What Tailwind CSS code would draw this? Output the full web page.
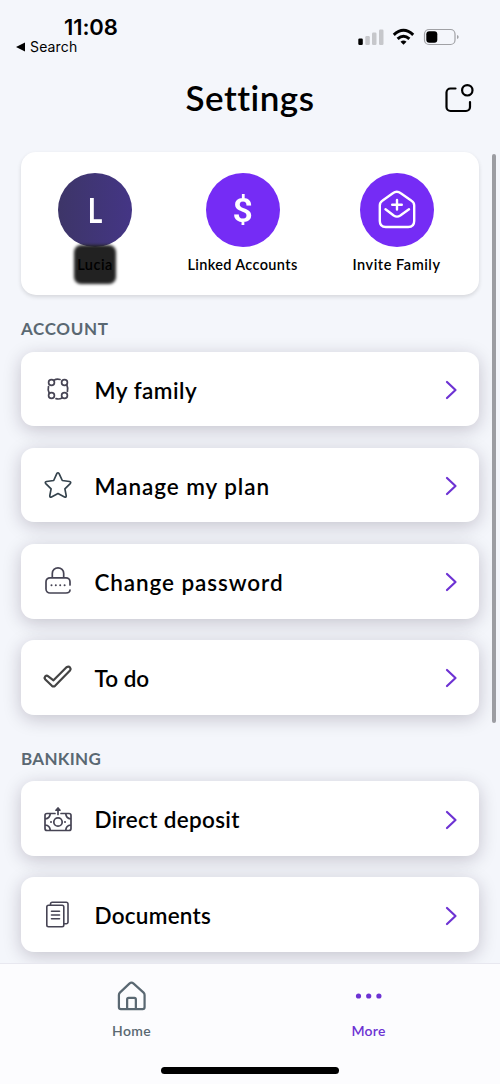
<!DOCTYPE html>
<html lang="en">
<head>
<meta charset="utf-8">
<title>Settings</title>
<script src="https://cdn.jsdelivr.net/npm/@tailwindcss/browser@4"></script>
</head>
<body class="bg-[#f4f6fb]">
<div class="relative flex h-[1084px] w-[500px] flex-col overflow-hidden bg-[#f4f6fb] font-[Lato,sans-serif] text-black">

  <div class="flex h-[60px] shrink-0 justify-between font-[Inter,sans-serif]">
    <div class="pl-4 pt-[15px]">
      <div class="pl-12 text-[22px] leading-[25px] font-semibold tracking-[-0.1px]">11:08</div>
      <div class="flex items-center gap-[5px] text-[14px] leading-[13px] tracking-[0.15px]">
        <svg class="h-[10px] w-[9px]" viewBox="0 0 9 10"><path d="M0 5 9 .5v9z"/></svg>
        <span>Search</span>
      </div>
    </div>
    <svg class="mr-[40px] mt-[26px] h-[22px] w-[103px]" viewBox="357 26 103 22">
      <rect x="358.300" y="38.500" width="4.500" height="6.500" rx="1.200"/>
      <g fill="#c6c7cb"><rect x="365.300" y="36" width="4.500" height="9" rx="1.200"/><rect x="372" y="32.500" width="4.500" height="12.500" rx="1.200"/><rect x="379" y="29.500" width="4.500" height="15.500" rx="1.200"/></g>
      <g fill="none" stroke="#000" stroke-width="3"><path d="M393.800 34.800Q403.500 25.800 413.200 34.800"/><path d="M397.600 38.900Q403.500 33.600 409.400 38.900"/></g>
      <path d="M400.500 41.700q3-2.300 6 0l-3 3.100z"/>
      <rect x="424.500" y="29.500" width="30.500" height="15" rx="4.500" fill="none" stroke="#a0a1a5" stroke-width="1.200"/>
      <rect x="426.300" y="31.300" width="11" height="11.500" rx="3"/>
      <path d="M457 35q1.700.5 1.700 2t-1.700 2z" fill="#a0a1a5"/>
    </svg>
  </div>

  <header class="grid h-[92px] shrink-0 grid-cols-[1fr_auto_1fr] items-start">
    <h1 class="col-start-2 pt-[14px] text-[35px] leading-[46px] font-semibold tracking-[0.5px]">Settings</h1>
    <svg class="mr-[24px] mt-[22px] h-[32px] w-[32px] justify-self-end" viewBox="444.500 82 32 32" fill="none" stroke="#000" stroke-width="2.200" stroke-linecap="round"><path d="M456 88.500h-5a4 4 0 0 0-4 4V107a4 4 0 0 0 4 4h15.500a4 4 0 0 0 4-4v-5"/><circle cx="467.800" cy="90.300" r="5.200"/></svg>
  </header>

  <main class="flex flex-col px-[21px]">
    <section class="flex h-[143px] shrink-0 rounded-[15px] bg-white pt-[21px] text-[14.500px] font-semibold shadow-[0_2px_4px_rgba(0,0,0,0.13)]">
      <div class="flex w-[148px] flex-col items-center">
        <div class="flex size-[74px] items-center justify-center rounded-full bg-linear-to-r from-[#3d3568] to-[#443585] text-[35px] text-white"><span class="-mt-[2px] scale-x-80 leading-none font-bold">L</span></div>
        <div class="relative flex h-[38px] w-[44px] items-center justify-center">
          <div class="absolute inset-x-[1px] -top-[2px] h-[39px] rounded-[7px] bg-[#222] blur-[1.500px]"></div>
          <span class="relative -top-[1px] tracking-[0.5px] text-black">Lucia</span>
        </div>
      </div>
      <div class="flex w-[147px] flex-col items-center">
        <div class="flex size-[74px] items-center justify-center rounded-full bg-[#752cf5] text-[34px] text-white"><span class="scale-x-105 font-[Roboto,sans-serif] leading-none font-semibold">$</span></div>
        <span class="mt-[7px] leading-[22px] tracking-[0.35px] whitespace-nowrap">Linked Accounts</span>
      </div>
      <div class="flex w-[161px] flex-col items-center">
        <div class="size-[74px] rounded-full bg-[#752cf5]">
          <svg class="size-[74px]" viewBox="360 173 74 74" fill="none" stroke="#fff" stroke-width="2.400" stroke-linecap="round" stroke-linejoin="round"><path d="M379.800 205.500q0-3 2.500-4.700l10.500-7.500q4-3 8 0l10.700 7.500q2.700 1.700 2.700 4.700V221q0 6-6 6h-22.400q-6 0-6-6z"/><path d="m385.500 209.300 8.200 6.200q3.300 2.200 6.600 0l8.700-6.200M397 200v9.500M392.200 204.800h9.600"/></svg>
        </div>
        <span class="mt-[7px] leading-[22px] tracking-[0.55px] whitespace-nowrap">Invite Family</span>
      </div>
    </section>

    <h2 class="mt-[23px] h-[33.600px] text-[17px] leading-[21px] font-bold tracking-[0.65px] text-[#5a6872]">ACCOUNT</h2>
    <div class="flex flex-col gap-[21.600px] text-[22.500px] font-semibold">
      <div class="flex h-[74.600px] items-center rounded-[13px] bg-white pr-[21.500px] pl-[21px] shadow-[0_4px_18px_rgba(30,20,45,0.22)]">
        <svg class="size-[32px]" viewBox="0 0 32 32" fill="none" stroke="#464454" stroke-width="1.700" stroke-linecap="round"><circle cx="9.500" cy="9.500" r="2.900"/><circle cx="22.500" cy="9.500" r="2.900"/><circle cx="9.500" cy="22.500" r="2.900"/><circle cx="22.500" cy="22.500" r="2.900"/><path d="M12 7.200q2.500-1.500 6-.7M24.800 12q1.500 3 .6 6.500M20 25q-2.500 1.500-6 .7M7.200 20q-1.600-3-.7-6.500"/></svg>
        <span class="ml-[20.500px] flex-1 pt-[3px] tracking-[0.5px]">My family</span>
        <svg class="mt-[2px] h-[20px] w-[14px]" viewBox="0 0 14 20" fill="none" stroke="#6d32d3" stroke-width="2.200" stroke-linecap="round" stroke-linejoin="round"><path d="m3 2 8.500 8L3 18"/></svg>
      </div>
      <div class="flex h-[74.600px] items-center rounded-[13px] bg-white pr-[21.500px] pl-[21px] shadow-[0_4px_18px_rgba(30,20,45,0.22)]">
        <svg class="size-[32px]" viewBox="0 0 32 32" fill="none" stroke="#35434d" stroke-width="1.700" stroke-linejoin="round"><path d="M14.800 4.600q1.200-1.700 2.300 0l3.200 6.900 7.200 1q2 .5.700 2.100l-5.300 5.300 1.300 6.800q.2 2-1.700 1.300L16 24.600 9.500 28q-1.900.7-1.700-1.300l1.300-6.800-5.300-5.300q-1.300-1.600.7-2.100l7.200-1z"/></svg>
        <span class="ml-[20.500px] flex-1 pt-[3px] tracking-[0.93px]">Manage my plan</span>
        <svg class="mt-[2px] h-[20px] w-[14px]" viewBox="0 0 14 20" fill="none" stroke="#6d32d3" stroke-width="2.200" stroke-linecap="round" stroke-linejoin="round"><path d="m3 2 8.500 8L3 18"/></svg>
      </div>
      <div class="flex h-[74.600px] items-center rounded-[13px] bg-white pr-[21.500px] pl-[21px] shadow-[0_4px_18px_rgba(30,20,45,0.22)]">
        <svg class="size-[32px]" viewBox="0 0 32 32" fill="none" stroke="#464454" stroke-width="1.700" stroke-linecap="round"><path d="M10.300 12.800V8.500a5.700 5.700 0 0 1 11.400 0v4.300M28 20v-3.200a4 4 0 0 0-4-4H8a4 4 0 0 0-4 4V24a4 4 0 0 0 4 4h16q3.800 0 4-3"/><path d="M9.500 20.200h.01M13.800 20.200h.01M18.200 20.200h.01M22.600 20.200h.01" stroke-width="2"/></svg>
        <span class="ml-[20.500px] flex-1 pt-[3px] tracking-[0.9px]">Change password</span>
        <svg class="mt-[2px] h-[20px] w-[14px]" viewBox="0 0 14 20" fill="none" stroke="#6d32d3" stroke-width="2.200" stroke-linecap="round" stroke-linejoin="round"><path d="m3 2 8.500 8L3 18"/></svg>
      </div>
      <div class="flex h-[74.600px] items-center rounded-[13px] bg-white pr-[21.500px] pl-[21px] shadow-[0_4px_18px_rgba(30,20,45,0.22)]">
        <svg class="size-[32px]" viewBox="0 0 32 32" fill="none" stroke="#444" stroke-width="2.200" stroke-linejoin="round"><path d="m11.500 19.300 13-13q2.200-1.200 3.500.2 1.200 1.400 0 3.100L13.100 24.800q-1.600 1.300-3.200 0l-6.800-6.600q-1-1.500.2-2.900 1.400-1.200 3 0z"/></svg>
        <span class="ml-[20.500px] flex-1 pt-[3px]">To do</span>
        <svg class="mt-[2px] h-[20px] w-[14px]" viewBox="0 0 14 20" fill="none" stroke="#6d32d3" stroke-width="2.200" stroke-linecap="round" stroke-linejoin="round"><path d="m3 2 8.500 8L3 18"/></svg>
      </div>
    </div>

    <h2 class="mt-[33.500px] h-[33px] text-[17px] leading-[21px] font-bold tracking-[0.3px] text-[#5a6872]">BANKING</h2>
    <div class="flex flex-col gap-[21.600px] text-[22.500px] font-semibold">
      <div class="flex h-[74.600px] items-center rounded-[13px] bg-white pr-[21.500px] pl-[21px] shadow-[0_4px_18px_rgba(30,20,45,0.22)]">
        <svg class="size-[32px]" viewBox="0 0 32 32" fill="none" stroke="#464454" stroke-width="1.700" stroke-linecap="round" stroke-linejoin="round"><path d="M13 10.500H5a2 2 0 0 0-2 2v13a2 2 0 0 0 2 2h22a2 2 0 0 0 2-2v-13a2 2 0 0 0-2-2h-8M3.300 16q4.500-.5 5-5.300M28.700 16q-4.500-.5-5-5.300M3.300 22q4.500.5 5 5.300M28.700 22q-4.500.5-5 5.300"/><circle cx="16" cy="19" r="4.200"/><path d="M9 19h.01M23 19h.01" stroke-width="2"/><path d="M16 11.500V5.300M14 7.200l2-2.200 2 2.200z"/></svg>
        <span class="ml-[20.500px] flex-1 pt-[3px] tracking-[0.32px]">Direct deposit</span>
        <svg class="mt-[2px] h-[20px] w-[14px]" viewBox="0 0 14 20" fill="none" stroke="#6d32d3" stroke-width="2.200" stroke-linecap="round" stroke-linejoin="round"><path d="m3 2 8.500 8L3 18"/></svg>
      </div>
      <div class="flex h-[74.600px] items-center rounded-[13px] bg-white pr-[21.500px] pl-[21px] shadow-[0_4px_18px_rgba(30,20,45,0.22)]">
        <svg class="size-[32px]" viewBox="0 0 32 32" fill="none" stroke="#464454" stroke-width="1.600" stroke-linecap="round" stroke-linejoin="round"><rect x="4.800" y="6.300" width="17" height="21.500" rx="1.700"/><path d="M8.500 6V5a1.700 1.700 0 0 1 1.700-1.700H24.300A1.700 1.700 0 0 1 26 5v18a1.700 1.700 0 0 1-1.700 1.700h-2M9.500 12.300h8M9.500 16h8M9.500 19.700h8"/></svg>
        <span class="ml-[20.500px] flex-1 pt-[3px] tracking-[0.25px]">Documents</span>
        <svg class="mt-[2px] h-[20px] w-[14px]" viewBox="0 0 14 20" fill="none" stroke="#6d32d3" stroke-width="2.200" stroke-linecap="round" stroke-linejoin="round"><path d="m3 2 8.500 8L3 18"/></svg>
      </div>
    </div>
  </main>

  <div class="absolute top-[154px] right-[4px] h-[569px] w-[4px] rounded-full bg-[#9c9da2]"></div>

  <nav class="absolute inset-x-0 bottom-0 flex h-[121px] flex-col border-t border-[#e8e8f0] bg-[#fcfcfe] text-[14px] font-semibold">
    <div class="flex h-[96px] shrink-0 pr-[13px] pl-[13px]">
      <div class="flex flex-1 flex-col items-center pt-[17px] text-[#5a6872]">
        <svg class="size-[31px]" viewBox="0 0 32 32" fill="none" stroke="#5a6872" stroke-width="2.300" stroke-linejoin="round"><path d="M3 14.500q0-1.500 1-2.500l9.800-9.300q2.200-1.900 4.400 0L28.500 12q1 1 1 2.500V27q0 2-2 2H5q-2 0-2-2zM11.500 29V19q0-1.500 1.500-1.500h6q1.500 0 1.500 1.500v10"/></svg>
        <span class="mt-[9px] leading-[20px] tracking-[0.3px]">Home</span>
      </div>
      <div class="flex flex-1 flex-col items-center pt-[16px] text-[#6d32d3]">
        <svg class="size-[32px]" viewBox="0 0 32 32" fill="#6d32d3"><circle cx="5.500" cy="16" r="2.600"/><circle cx="15.700" cy="16" r="2.600"/><circle cx="25.900" cy="16" r="2.600"/></svg>
        <span class="mt-[9px] leading-[20px] tracking-[0.2px]">More</span>
      </div>
    </div>
    <div class="mt-[7px] ml-[161px] h-[7px] w-[178px] rounded-full bg-black"></div>
  </nav>
</div>
</body>
</html>
